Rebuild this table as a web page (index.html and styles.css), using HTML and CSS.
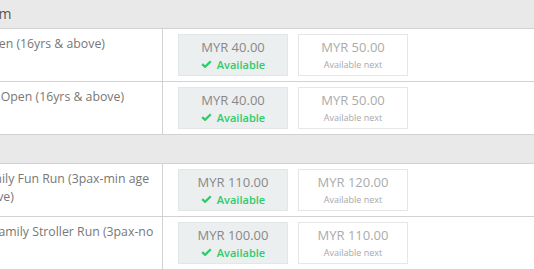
FILE: index.html
```html
<!DOCTYPE html>
<html>
<head>
<meta charset="utf-8">
<link rel="stylesheet" href="styles.css">
</head>
<body>
<div class="table">
  <div class="group-head">Platinum</div>
  <div class="row">
    <div class="label">Men Open (16yrs &amp; above)</div>
    <div class="prices">
      <div class="price current">
        <div class="amount">MYR 40.00</div>
        <div class="status"><svg class="check" width="11" height="8" viewBox="0 0 11 8"><path d="M1.2 4.1 L4.1 6.8 L9.8 1.2" fill="none" stroke="#2fcb6a" stroke-width="2.3" stroke-linecap="butt"/></svg>Available</div>
      </div>
      <div class="price next">
        <div class="amount">MYR 50.00</div>
        <div class="status">Available next</div>
      </div>
    </div>
  </div>
  <div class="row">
    <div class="label">Women Open (16yrs &amp; above)</div>
    <div class="prices">
      <div class="price current">
        <div class="amount">MYR 40.00</div>
        <div class="status"><svg class="check" width="11" height="8" viewBox="0 0 11 8"><path d="M1.2 4.1 L4.1 6.8 L9.8 1.2" fill="none" stroke="#2fcb6a" stroke-width="2.3" stroke-linecap="butt"/></svg>Available</div>
      </div>
      <div class="price next">
        <div class="amount">MYR 50.00</div>
        <div class="status">Available next</div>
      </div>
    </div>
  </div>
  <div class="group-head">Family</div>
  <div class="row">
    <div class="label">The Family Fun Run (3pax-min age 5 &amp; above)</div>
    <div class="prices">
      <div class="price current">
        <div class="amount">MYR 110.00</div>
        <div class="status"><svg class="check" width="11" height="8" viewBox="0 0 11 8"><path d="M1.2 4.1 L4.1 6.8 L9.8 1.2" fill="none" stroke="#2fcb6a" stroke-width="2.3" stroke-linecap="butt"/></svg>Available</div>
      </div>
      <div class="price next">
        <div class="amount">MYR 120.00</div>
        <div class="status">Available next</div>
      </div>
    </div>
  </div>
  <div class="row">
    <div class="label">Grand Family Stroller Run (3pax-no limit)</div>
    <div class="prices">
      <div class="price current">
        <div class="amount">MYR 100.00</div>
        <div class="status"><svg class="check" width="11" height="8" viewBox="0 0 11 8"><path d="M1.2 4.1 L4.1 6.8 L9.8 1.2" fill="none" stroke="#2fcb6a" stroke-width="2.3" stroke-linecap="butt"/></svg>Available</div>
      </div>
      <div class="price next">
        <div class="amount">MYR 110.00</div>
        <div class="status">Available next</div>
      </div>
    </div>
  </div>
</div>
</body>
</html>
```
FILE: styles.css
```css
html, body {
  margin: 0;
  padding: 0;
  background: #ffffff;
  overflow: hidden;
}
body {
  font-family: "Open Sans", "Liberation Sans", sans-serif;
  color: #777777;
}
.table {
  margin-left: -55px;
  width: 589px;
}
.group-head {
  height: 28px;
  line-height: 28px;
  padding: 0 8px;
  font-size: 14px;
  color: #555555;
  background: #e9e9e9;
  border-bottom: 1px solid #d2d2d2;
  white-space: nowrap;
}
.row {
  display: flex;
  border-bottom: 1px solid #d2d2d2;
}
.label {
  box-sizing: border-box;
  width: 218px;
  flex: none;
  padding: 6px 8px 0 8px;
  font-size: 12.3px;
  line-height: 18px;
  color: #777777;
  border-right: 1px solid #d2d2d2;
}
.prices {
  display: flex;
  gap: 10px;
  padding: 5px 15px;
}
.price {
  box-sizing: border-box;
  width: 110px;
  height: 42px;
  padding-top: 4px;
  text-align: center;
  border: 1px solid #e3e6e6;
}
.price.current {
  background: #ecefef;
}
.price.next {
  background: #ffffff;
  border-color: #e6e6e6;
}
.amount {
  font-size: 13px;
  line-height: 17px;
  color: #888888;
}
.next .amount {
  color: #ababab;
}
.status {
  display: flex;
  justify-content: center;
  align-items: center;
  gap: 5px;
  height: 16px;
  font-size: 11px;
  font-weight: 600;
  color: #2fcb6a;
}
.next .status {
  font-size: 9px;
  font-weight: 400;
  color: #a8a8a8;
}
.check {
  display: block;
}
```
